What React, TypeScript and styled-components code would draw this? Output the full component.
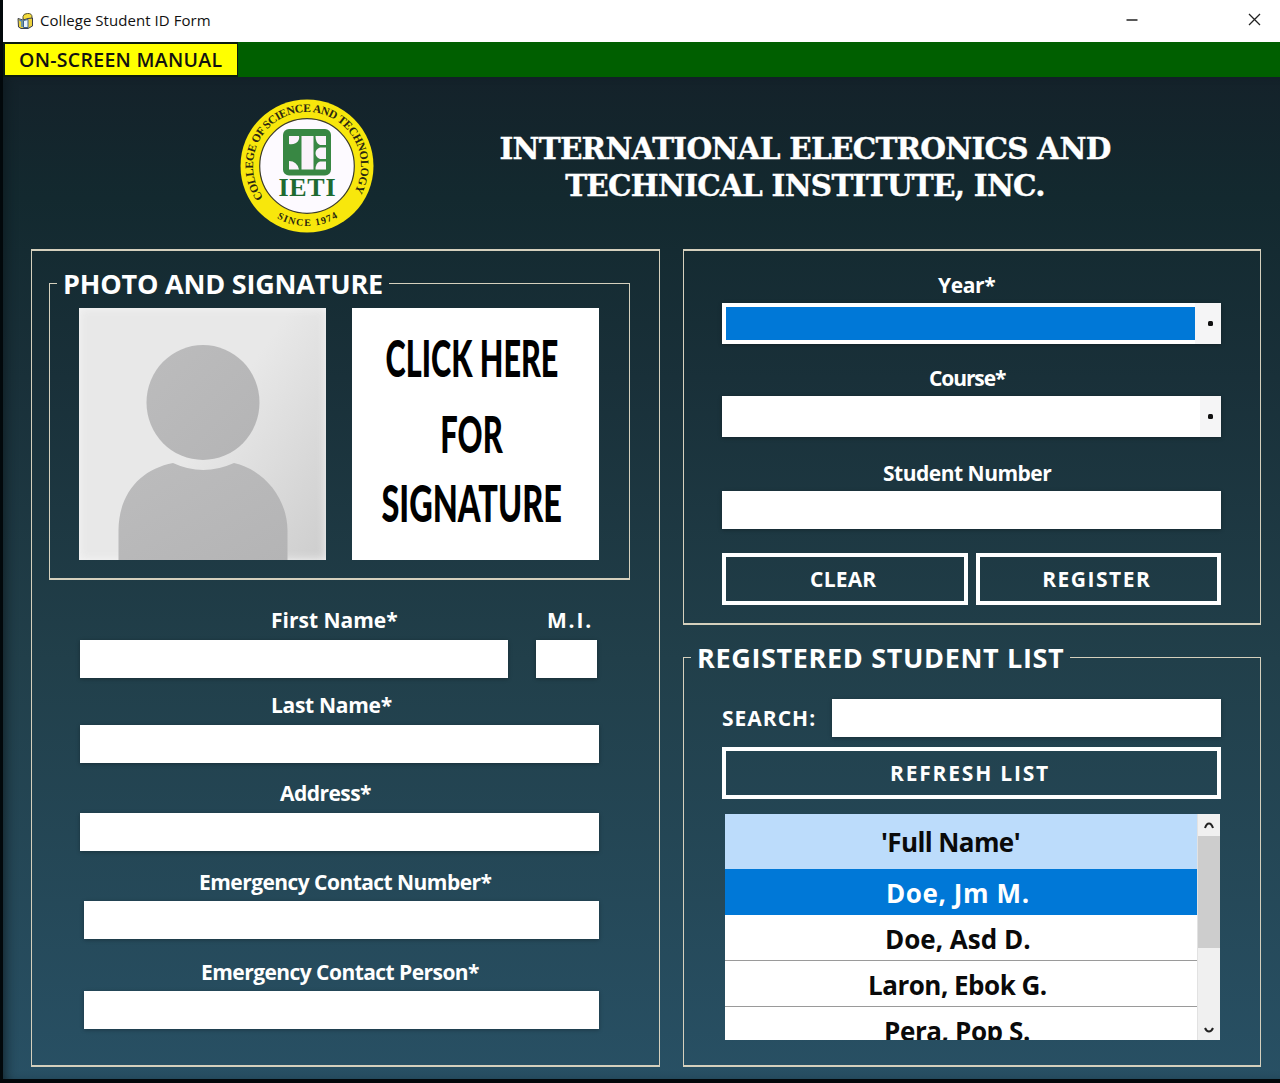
import React from "react";
import styled, { createGlobalStyle } from "styled-components";

const casual = `"Comic Sans MS", "Open Sans", "Noto Sans", sans-serif`;
const line = "#d5d0bd";

const GlobalStyle = createGlobalStyle`
  * { box-sizing: border-box; }
  body { margin: 0; background: #000; }
`;

const Window = styled.div`
  width: 1280px;
  height: 1083px;
  display: flex;
  flex-direction: column;
  background: #02080b;
  overflow: hidden;
  font-family: ${casual};
`;

const TitleBar = styled.header`
  height: 42px;
  margin-left: 3px;
  padding: 0 19px 0 14px;
  display: flex;
  align-items: center;
  background: #fff;
`;

const AppTitle = styled.span`
  margin: -2px auto 0 6px;
  font: 400 15px "Open Sans", sans-serif;
  letter-spacing: 0.05px;
  color: #111;
  white-space: nowrap;
`;

const Controls = styled.div`
  display: flex;
  align-items: center;
  gap: 110px;
  margin-top: -3px;
`;

const MenuBar = styled.nav`
  height: 35px;
  margin-left: 3px;
  padding: 2px 0 2px 2px;
  display: flex;
  background: linear-gradient(90deg, #0b1c10 0, #0b1c10 235px, #005f00 235px);
`;

const MenuItem = styled.button`
  width: 232px;
  height: 31px;
  padding: 0 0 0 14px;
  border: 0;
  background: #ffff00;
  color: #111;
  font: 600 19.5px/31px ${casual};
  letter-spacing: 0.3px;
  text-align: left;
  white-space: nowrap;
`;

const Body = styled.main`
  height: 1002px;
  margin-left: 3px;
  background: linear-gradient(180deg, #14222a 0%, #13292f 12%, #193039 30%, #213f4a 58%, #285064 100%);
  box-shadow: inset 8px 0 14px -8px #0b161b;
`;

const Header = styled.div`
  height: 172px;
  padding: 22px 0 0 237px;
  display: flex;
`;

const School = styled.h1`
  width: 640px;
  margin: 31px 0 0 111px;
  text-align: center;
  color: #fff;
  font: 700 29.5px/37px "DejaVu Serif", serif;
  letter-spacing: -0.75px;
  white-space: nowrap;
  -webkit-text-stroke: 0.4px #fff;
`;

const Columns = styled.div`
  display: grid;
  grid-template-columns: 629px 578px;
  column-gap: 23px;
  height: 818px;
  padding-left: 28px;
`;

const Panel = styled.section<{ $height: number; $pad: string }>`
  height: ${(p) => p.$height}px;
  padding: ${(p) => p.$pad};
  border: 1px solid ${line};
  border-width: 2px 1px;
`;

const Group = styled.fieldset<{ $width: number; $height: number; $top: number }>`
  width: ${(p) => p.$width}px;
  height: ${(p) => p.$height}px;
  min-width: 0;
  margin: ${(p) => p.$top}px 0 0;
  padding: 0;
  border: 1px solid ${line};
  border-bottom-width: 2px;
`;

const Legend = styled.legend<{ $spacing: number }>`
  height: 28px;
  margin-left: 7px;
  padding: 0 6px;
  color: #fff;
  font: 700 27px/29px ${casual};
  letter-spacing: ${(p) => p.$spacing}px;
  white-space: nowrap;
`;

const Pictures = styled.div`
  display: flex;
  gap: 26px;
  padding: 11px 0 0 29px;
`;

const Photo = styled.div`
  width: 247px;
  height: 252px;
  background: linear-gradient(125deg, #e8e8e8 50%, #cdcdcd 100%);
  box-shadow: inset 0 0 10px #f6f6f6;
`;

const Signature = styled.div`
  width: 247px;
  height: 252px;
  padding-top: 11px;
  display: flex;
  flex-direction: column;
  align-items: center;
  background: #fff;
`;

const SignatureLine = styled.span<{ $height: number; $scale: number }>`
  height: ${(p) => p.$height}px;
  margin-left: -8px;
  color: #000;
  font: 900 51px/${(p) => p.$height}px Lato, sans-serif;
  transform: scaleX(${(p) => p.$scale});
  white-space: nowrap;
`;

const Row = styled.div<{ $gap: number; $top: number }>`
  display: flex;
  gap: ${(p) => p.$gap}px;
  margin-top: ${(p) => p.$top}px;
`;

const Field = styled.label<{ $width?: number; $top?: number; $left?: number }>`
  display: flex;
  flex-direction: column;
  width: ${(p) => (p.$width ? `${p.$width}px` : "auto")};
  margin-top: ${(p) => p.$top ?? 0}px;
  margin-left: ${(p) => p.$left ?? 0}px;
`;

const Caption = styled.span<{ $indent: number; $spacing?: number; $below?: number }>`
  height: 28px;
  margin-bottom: ${(p) => p.$below ?? 6}px;
  padding-left: ${(p) => p.$indent}px;
  color: #fff;
  font: 700 21px/28px ${casual};
  letter-spacing: ${(p) => p.$spacing ?? 0}px;
  white-space: nowrap;
`;

const Input = styled.input`
  width: 100%;
  height: 38px;
  min-width: 0;
  padding: 0 8px;
  border: 0;
  border-radius: 0;
  background: #fff;
  font: 20px ${casual};
  box-shadow: 0 1px 4px rgba(0, 0, 0, 0.3);
`;

const Select = styled.div`
  height: 41px;
  padding: 4px 0 4px 4px;
  display: flex;
  background: #fff;
  box-shadow: 0 1px 4px rgba(0, 0, 0, 0.3);
`;

const SelectValue = styled.div<{ $active?: boolean }>`
  flex: 1;
  background: ${(p) => (p.$active ? "#0078d7" : "#fff")};
`;

const SelectArrow = styled.div<{ $width: number }>`
  width: ${(p) => p.$width}px;
  margin: -4px 0;
  padding-left: ${(p) => p.$width - 21}px;
  display: flex;
  align-items: center;
  justify-content: center;
  background: #f5f5f6;

  &::before {
    content: "";
    width: 5px;
    height: 5px;
    border-radius: 1.5px;
    background: #111;
  }
`;

const Button = styled.button<{ $spacing: number; $top?: number }>`
  flex: 1;
  width: 100%;
  height: 52px;
  margin-top: ${(p) => p.$top ?? 0}px;
  padding: 1px 3px 0 0;
  border: 4px solid #fff;
  background: transparent;
  color: #fff;
  font: 700 21px/43px ${casual};
  letter-spacing: ${(p) => p.$spacing}px;
  white-space: nowrap;
`;

const ListBody = styled.div`
  padding: 28px 39px 0 38px;
`;

const SearchRow = styled.label`
  display: flex;
  align-items: center;
  height: 38px;
`;

const SearchText = styled.span`
  flex: 0 0 110px;
  color: #fff;
  font: 700 21px/38px ${casual};
  letter-spacing: 1px;
`;

const Table = styled.div`
  display: flex;
  width: 495px;
  height: 226px;
  margin: 15px 0 0 3px;
  overflow: hidden;
  background: #fff;
`;

const Names = styled.div`
  width: 472px;
  display: flex;
  flex-direction: column;
`;

const NameCell = styled.div<{ $kind?: "head" | "active"; $indent: number; $spacing: number }>`
  flex: 0 0 auto;
  height: ${(p) => (p.$kind === "head" ? 55 : 46)}px;
  padding: 1px 0 0 ${(p) => p.$indent}px;
  border-bottom: 1px solid ${(p) => (p.$kind ? "transparent" : "#9a9a9a")};
  background: ${(p) => (p.$kind === "head" ? "#bcdcfb" : p.$kind === "active" ? "#0078d7" : "#fff")};
  color: ${(p) => (p.$kind === "active" ? "#fff" : "#0a0a0a")};
  font: 700 26px/${(p) => (p.$kind === "head" ? 55 : 47)}px ${casual};
  letter-spacing: ${(p) => p.$spacing}px;
  white-space: nowrap;
`;

const ScrollBar = styled.div`
  width: 23px;
  display: flex;
  flex-direction: column;
  align-items: center;
  justify-content: space-between;
  background: #f0f0f0;
  border-left: 1px solid #e2e2e2;
`;

const Thumb = styled.div`
  width: 100%;
  height: 112px;
  margin-bottom: 70px;
  background: #cdcdcd;
`;

const ScrollIcon = styled.svg`
  flex: 0 0 22px;
  width: 22px;
`;

const Seal = () => (
  <svg width="134" height="134" viewBox="0 0 134 134">
    <defs>
      <path id="arcTop" d="M23.3 98.7 A54 54 0 1 1 110.7 98.7" />
      <path id="arcBottom" d="M31 115 A60 60 0 0 0 103 115" />
    </defs>
    <circle cx="67" cy="67" r="66.5" fill="#f8e70c" />
    <circle cx="67" cy="67" r="47.3" fill="#fdfaff" stroke="#3b3b2c" strokeWidth="1.2" />
    <g fill="#2b2810" fontFamily="Liberation Serif, serif" fontWeight="700" fontSize="11.5">
      <text textLength="230" lengthAdjust="spacing">
        <textPath href="#arcTop">COLLEGE OF SCIENCE AND TECHNOLOGY</textPath>
      </text>
      <text fontSize="10" textLength="64" lengthAdjust="spacing">
        <textPath href="#arcBottom" startOffset="7">SINCE 1974</textPath>
      </text>
    </g>
    <rect x="43" y="30" width="48" height="46.5" rx="6" fill="#388743" />
    <g fill="#fbf2fb">
      <rect x="61.5" y="37" width="12" height="33.5" />
      <path d="M49 37H59Q60 41 56 44Q52 46 49 45Z" />
      <path d="M49 62Q57 62 59 70.5H49Z" />
      <path d="M75.500 37H86V46H80Q75.500 44 75.500 37Z" />
      <path d="M86 48.500V60H80Q75.500 58 75.500 54Q75.500 50 80 48.500Z" />
      <path d="M86 62.500V70.500H75.500Q75.500 64 80 62.500Z" />
    </g>
    <text x="38.500" y="97" fontFamily="Liberation Serif, serif" fontWeight="700" fontSize="26" fill="#1e6a31" textLength="57">
      IETI
    </text>
  </svg>
);

const AppIcon = () => (
  <svg width="17" height="18" viewBox="0 0 17 18">
    <path d="M6 4.500Q6.500 1.500 10.500 1.500Q15 1.200 15 5L14.500 9L9 8L6 7Z" fill="#f5dc3c" stroke="#55512c" />
    <path d="M1 6.500L6 8L11 6.500L15.500 6V14L11 16.500H4L1.500 15Z" fill="#ecd13c" stroke="#393d4c" />
    <path d="M6.500 8.500L11 7.500V15.500H6.500Z" fill="#eaf3fc" stroke="#395f91" />
    <path d="M2.500 8L5 9V15" stroke="#4c84bd" strokeWidth="1.500" fill="none" />
  </svg>
);

const Silhouette = () => (
  <svg width="247" height="252" viewBox="0 0 247 252">
    <defs>
      <linearGradient id="shade" x1="0" y1="0" x2="1" y2="1">
        <stop offset="0" stopColor="#bcbcbd" />
        <stop offset="1" stopColor="#b4b4b5" />
      </linearGradient>
    </defs>
    <ellipse cx="124" cy="94.500" rx="56.500" ry="57.500" fill="url(#shade)" />
    <path d="M39.500 252V222C40 184 63 161 94 155Q124 169 155 155C183 161 208 188 208.500 222V252Z" fill="url(#shade)" />
  </svg>
);

const students = [
  { name: "Doe, Asd D.", indent: 160, spacing: 0 },
  { name: "Laron, Ebok G.", indent: 143, spacing: -0.5 },
  { name: "Pera, Pop S.", indent: 159, spacing: -0.4 },
];

export default function App() {
  return (
    <Window>
      <GlobalStyle />
      <TitleBar>
        <AppIcon />
        <AppTitle>College Student ID Form</AppTitle>
        <Controls>
          <svg width="12" height="12" viewBox="0 0 12 12">
            <path d="M0.500 6H11.500" stroke="#222" strokeWidth="1.500" />
          </svg>
          <svg width="13" height="13" viewBox="0 0 13 13">
            <path d="M1 1L12 12M12 1L1 12" stroke="#222" strokeWidth="1.300" />
          </svg>
        </Controls>
      </TitleBar>
      <MenuBar>
        <MenuItem>ON-SCREEN MANUAL</MenuItem>
      </MenuBar>
      <Body>
        <Header>
          <Seal />
          <School>
            INTERNATIONAL ELECTRONICS AND
            <br />
            TECHNICAL INSTITUTE, INC.
          </School>
        </Header>
        <Columns>
          <Panel $height={818} $pad="18px 0 0 17px">
            <Group $width={581} $height={311} $top={0}>
              <Legend $spacing={-0.2}>PHOTO AND SIGNATURE</Legend>
              <Pictures>
                <Photo>
                  <Silhouette />
                </Photo>
                <Signature>
                  <SignatureLine $height={77} $scale={0.6}>CLICK HERE</SignatureLine>
                  <SignatureLine $height={75} $scale={0.605}>FOR</SignatureLine>
                  <SignatureLine $height={63} $scale={0.637}>SIGNATURE</SignatureLine>
                </Signature>
              </Pictures>
            </Group>
            <Row $gap={28} $top={26}>
              <Field $width={428} $left={31}>
                <Caption $indent={191}>First Name*</Caption>
                <Input />
              </Field>
              <Field $width={61}>
                <Caption $indent={11} $spacing={1.8}>M.I.</Caption>
                <Input />
              </Field>
            </Row>
            <Field $width={519} $left={31} $top={13}>
              <Caption $indent={191} $spacing={-0.3}>Last Name*</Caption>
              <Input />
            </Field>
            <Field $width={519} $left={31} $top={16}>
              <Caption $indent={200} $spacing={-0.55}>Address*</Caption>
              <Input />
            </Field>
            <Field $width={515} $left={35} $top={17}>
              <Caption $indent={115} $spacing={-0.55} $below={5}>Emergency Contact Number*</Caption>
              <Input />
            </Field>
            <Field $width={515} $left={35} $top={19}>
              <Caption $indent={117} $spacing={-0.55} $below={5}>Emergency Contact Person*</Caption>
              <Input />
            </Field>
          </Panel>
          <div>
            <Panel $height={376} $pad="20px 39px 0 38px">
              <Field>
                <Caption $indent={216} $spacing={-0.4} $below={4}>Year*</Caption>
                <Select>
                  <SelectValue $active />
                  <SelectArrow $width={26} />
                </Select>
              </Field>
              <Field $top={20}>
                <Caption $indent={207} $spacing={-1.1} $below={4}>Course*</Caption>
                <Select>
                  <SelectValue />
                  <SelectArrow $width={21} />
                </Select>
              </Field>
              <Field $top={22}>
                <Caption $indent={161} $spacing={-0.5} $below={4}>Student Number</Caption>
                <Input />
              </Field>
              <Row $gap={8} $top={24}>
                <Button $spacing={0.2}>CLEAR</Button>
                <Button $spacing={1.5}>REGISTER</Button>
              </Row>
            </Panel>
            <Group $width={578} $height={424} $top={18}>
              <Legend $spacing={0.65}>REGISTERED STUDENT LIST</Legend>
              <ListBody>
                <SearchRow>
                  <SearchText>SEARCH:</SearchText>
                  <Input />
                </SearchRow>
                <Button $spacing={1.8} $top={10}>REFRESH LIST</Button>
                <Table>
                  <Names>
                    <NameCell $kind="head" $indent={156} $spacing={-0.6}>'Full Name'</NameCell>
                    <NameCell $kind="active" $indent={161} $spacing={0.6}>Doe, Jm M.</NameCell>
                    {students.map((s) => (
                      <NameCell key={s.name} $indent={s.indent} $spacing={s.spacing}>
                        {s.name}
                      </NameCell>
                    ))}
                  </Names>
                  <ScrollBar>
                    <ScrollIcon viewBox="0 0 22 22">
                      <path d="M7 14Q8.500 9.500 11 9.500Q13.500 9.500 15 14" stroke="#222" strokeWidth="2" fill="none" />
                    </ScrollIcon>
                    <Thumb />
                    <ScrollIcon viewBox="0 0 22 22">
                      <path d="M7 10Q8.500 13.500 11 13.500Q13.500 13.500 15 10" stroke="#222" strokeWidth="2" fill="none" />
                    </ScrollIcon>
                  </ScrollBar>
                </Table>
              </ListBody>
            </Group>
          </div>
        </Columns>
      </Body>
    </Window>
  );
}
